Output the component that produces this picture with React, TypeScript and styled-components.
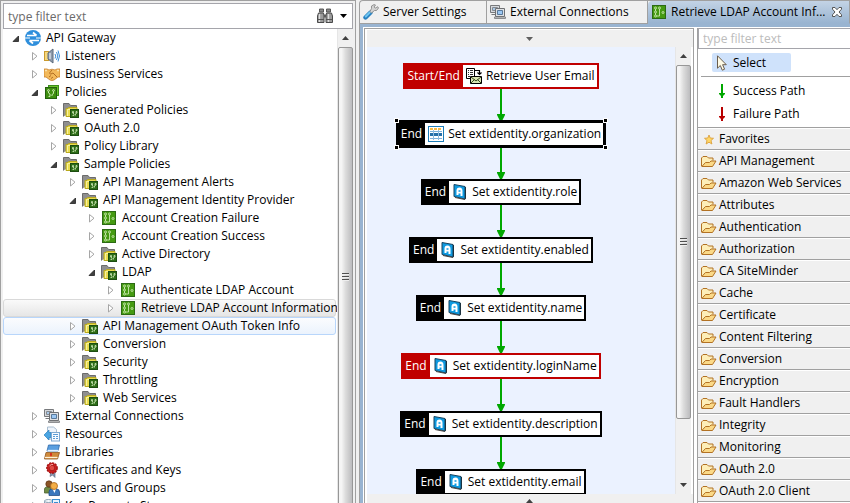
import React, { useState } from "react";
import styled, { createGlobalStyle, css } from "styled-components";

const GlobalStyle = createGlobalStyle`
  * { box-sizing: border-box; }
  body {
    margin: 0;
    background: #f0f0f0;
    color: #000;
    font-family: "Open Sans", "Noto Sans", sans-serif;
    font-size: 12px;
    line-height: 18px;
    overflow: hidden;
  }
  button, input {
    font: inherit;
    color: inherit;
    border: 0;
    padding: 0;
    margin: 0;
    background: none;
    outline: none;
  }
  ul { list-style: none; margin: 0; padding: 0; }
`;

/* ---------- icons ---------- */

const Icon = styled.svg.attrs({ viewBox: "0 0 16 16", "aria-hidden": true })`
  display: block;
  flex: none;
  width: 16px;
  height: 16px;
`;

const GatewayIcon = () => (
  <Icon>
    <circle cx="8" cy="8" r="8" fill="#2f8fdc" />
    <path d="M2 5.500h9.500M8 2.500l3.500 3M14 10.500H4.500M8 13.500l-3.500-3" stroke="#fff" strokeWidth="1.700" fill="none" />
    <path d="M0 8h5M11 8h5" stroke="#fff" strokeWidth="1" />
  </Icon>
);

const ListenersIcon = () => (
  <Icon>
    <rect x="0.500" y="3.500" width="4" height="9" fill="#f6d77c" stroke="#c99a2e" />
    <path d="M4 5l5-4v14l-5-4z" fill="#8e9bab" stroke="#5c6a7c" />
    <path d="M6 5v6" stroke="#d4dbe4" strokeWidth="1.500" />
    <path d="M11 6q1.500 2 0 4.500M12.500 4q2.700 4 0 8M14 2.500q3 5.500 0 11" stroke="#3b8ed8" fill="none" />
  </Icon>
);

const BusinessIcon = () => (
  <Icon>
    <path d="M0 3h3l2 1 3-.8 3 .8 2-1h3v8h-2l-4 3-2 .5-2-.5-4-3H0z" fill="#f3b95a" stroke="#c67e28" strokeWidth=".8" />
    <path d="M8 4L5.500 7l1 1.200L9 7l4 4M5 11l2-1.500M7 12.500l2-1.500" stroke="#a9641c" fill="none" strokeWidth=".9" />
    <path d="M1 4.500h2M13 4.500h2" stroke="#fbe3ab" strokeWidth="1.500" />
  </Icon>
);

const Circuit = () => (
  <g fill="none" stroke="#d8f0c0" strokeWidth=".8">
    <circle cx="4.500" cy="4" r="1" />
    <circle cx="4.500" cy="8" r="1" />
    <circle cx="4.500" cy="12" r="1" />
    <path d="M4.500 5v2M4.500 9v2M8.500 5v7h-3" />
    <circle cx="8.500" cy="4" r="1" />
    <circle cx="12" cy="8.500" r="1" />
  </g>
);

const PolicyIcon = () => (
  <Icon>
    <rect x="1.500" y="1.500" width="13" height="13" fill="#459a12" stroke="#2c6a14" />
    <Circuit />
  </Icon>
);

const PoliciesIcon = () => (
  <Icon>
    <rect x="4.500" y="1.500" width="10" height="10" fill="#6cc42c" stroke="#3c8c1a" />
    <rect x="1.500" y="3.500" width="11" height="11" fill="#3f8f10" stroke="#24600f" />
    <g fill="none" stroke="#d8f0c0" strokeWidth=".9">
      <circle cx="4.500" cy="6.500" r=".9" />
      <path d="M4.500 7.500v1.500l1.500 1v2.500H4.500" />
      <circle cx="9.500" cy="6.500" r=".9" />
      <path d="M9.500 7.500v2l-1.500 1v1.500" />
    </g>
  </Icon>
);

const FolderPolicyIcon = () => (
  <Icon>
    <path d="M.5 14.500v-13h5.500l1.500 2h6v3" fill="#8f8f8f" stroke="#6c6c6c" />
    <path d="M3 14.500V6.500h2l.5-1h8.500v9z" fill="#e9dc50" stroke="#b9a91e" />
    <path d="M4.500 14V7.500h8.500" fill="none" stroke="#f8f2a0" />
    <rect x="7.500" y="7.500" width="8" height="8" fill="#2d6d17" stroke="#1d4d12" />
    <path d="M9.500 9.500h1v1.500h-1zM10 11l1 1v1.500H9.500M13 9.500h1V11h-1zM13.500 11l-1 1v1.500" fill="none" stroke="#cfe8b8" strokeWidth=".8" />
  </Icon>
);

const ConnectionsIcon = () => (
  <Icon>
    <path d="M.5 1.500h9v7h-9zM1.500 10.500h7" fill="#d6d9dd" stroke="#77797c" />
    <path d="M2.500 3.500h5v3h-5z" fill="#a8c8e8" stroke="#868b91" />
    <path d="M5.500 4.500h9v8h-9z" fill="#dfe1e4" stroke="#6e7073" />
    <path d="M7.500 6.500h5v4h-5z" fill="#9cc7f3" stroke="#58799b" />
    <path d="M4.500 14.500h11v-1.500h-11z" fill="#d6d6d6" stroke="#77797c" strokeWidth=".8" />
  </Icon>
);

const ResourcesIcon = () => (
  <Icon>
    <path d="M3.500 1h6l3 2.500V13h-9z" fill="#eef4fb" stroke="#a8bccf" />
    <path d="M0 9l5-5v2.500h2v5H5V14z" fill="#4aa5e2" stroke="#2d7fbf" strokeWidth=".7" />
    <rect x="7.500" y="6.500" width="8" height="8.500" fill="#f8fbff" stroke="#7ea9d2" />
    <path d="M9 8.500h5M9 10.500h2M12 10.500h2M9 12.500h2M12 12.500h2" stroke="#5b9bd5" />
  </Icon>
);

const LibrariesIcon = () => (
  <Icon>
    <path d="M4.500 1h11L14 7H3z" fill="#5a9fe0" stroke="#2e68a8" strokeWidth=".8" />
    <path d="M3.500 6.500h11" stroke="#e4f1ff" strokeWidth="1.300" />
    <path d="M2 8.500h13.500l-2 6.500H.5z" fill="#cf8a3c" stroke="#8e5620" strokeWidth=".8" />
    <path d="M1 13.500h12.500" stroke="#fff2d8" strokeWidth="1.300" />
    <path d="M6 9h2v3.500l-1-1-1 1z" fill="#d9321e" />
  </Icon>
);

const CertificateIcon = () => (
  <Icon>
    <path d="M7 9l-1 5.500 2.500-1.500 2.500 2.500V9z" fill="#8794ad" stroke="#566582" strokeWidth=".6" />
    <circle cx="8" cy="6" r="5.200" fill="#cc1f1f" stroke="#9e1313" strokeWidth="1.300" strokeDasharray="2 1" />
    <circle cx="8" cy="6" r="2.800" fill="#e04a44" stroke="#a01616" strokeWidth=".8" />
    <path d="M5.500 4q1.500-2 3.500-1.500" stroke="#f7a9a4" fill="none" />
  </Icon>
);

const UsersIcon = () => (
  <Icon>
    <path d="M.5 13V9q0-2 3-2h3v6z" fill="#6f8c46" stroke="#4b6330" strokeWidth=".8" />
    <circle cx="5" cy="4" r="3.200" fill="#8c5426" stroke="#5d3414" strokeWidth=".7" />
    <path d="M5 15.500V12q0-3 3-3h4.500q3 0 3 3v3.500z" fill="#3a77bd" stroke="#24518a" strokeWidth=".8" />
    <path d="M8.500 9h3.500l-1.500 4z" fill="#fff" />
    <circle cx="10" cy="6" r="3.500" fill="#f4ae46" stroke="#a9661b" strokeWidth=".8" />
  </Icon>
);

const StoreIcon = () => (
  <Icon>
    <path d="M.5 3v10q4 3 8 0V3z" fill="#dfe9f2" stroke="#8ca2b5" />
    <ellipse cx="4.500" cy="3" rx="4" ry="1.500" fill="#f5f9fc" stroke="#8ca2b5" />
    <rect x="8.500" y="1.500" width="7" height="12" fill="#e8f4ff" stroke="#3c8ecf" />
    <path d="M10 4.500h4M10 7.500h4" stroke="#3c8ecf" />
  </Icon>
);

const BinocularsIcon = () => (
  <Icon>
    <path d="M2.500 1h4v3h-4zM9.500 1h4v3h-4z" fill="#8a8a8a" stroke="#4d4d4d" strokeWidth=".9" />
    <path d="M1.500 5h5l.5 3v6.500H.5V8zM9.500 5h5l1 3v6.500H9V8z" fill="#9b9b9b" stroke="#4a4a4a" />
    <path d="M7 6.500h2v3H7z" fill="#5c5c5c" />
    <path d="M2.500 6v8M11.500 6v8" stroke="#ddd" strokeWidth="1.300" />
    <path d="M.5 11.500h6.500M9 11.500h6.500" stroke="#555" />
  </Icon>
);

const WrenchIcon = () => (
  <Icon>
    <path d="M7.500 8.500L2.500 13.500" stroke="#2780c0" strokeWidth="4.400" strokeLinecap="round" />
    <path d="M7 8.300L2.800 12.500" stroke="#6fc5f0" strokeWidth="2" strokeLinecap="round" />
    <path d="M7 7.500L8.500 9l3-2.500h2L15.500 4l-.8-1.300-2.200 1.300-1.500-1L12.500 1 11 .6 8.500 2v2.500z" fill="#d3d3d3" stroke="#8b8b8b" strokeWidth=".9" />
  </Icon>
);

const MailListIcon = () => (
  <Icon>
    <path d="M.5.500h8v10h-8z" fill="#fff" stroke="#000" />
    <path d="M2 2.500h1M4 2.500h3M2 4.500h1M4 4.500h3M2 6.500h1M4 6.500h3M2 8.500h2" stroke="#333" />
    <path d="M9 2.500h4.500V6M11.500 4.500l2 2 2-2" fill="none" stroke="#000" strokeWidth="1.200" />
    <path d="M4.500 8.500h11v7h-11z" fill="#d9e6b4" stroke="#000" />
    <path d="M5 9l5 4 5-4M5 15l3.500-3.500M15 15l-3.500-3.500" fill="none" stroke="#36461c" />
  </Icon>
);

const TableIcon = () => (
  <Icon>
    <rect x=".5" y=".5" width="15" height="15" fill="#fff" stroke="#1c7db8" />
    <path d="M2 3h12" stroke="#f7bb45" strokeWidth="2" strokeDasharray="3 1" />
    <path d="M2 5.500h12M2 7.500h12M2 9.500h12M2 12.500h12" stroke="#7eb2db" />
    <rect x="2" y="7" width="12" height="3" fill="#256fa8" />
    <path d="M5.500 4v10M10.500 4v10" stroke="#8fbbe0" />
  </Icon>
);

const AttributeIcon = () => (
  <Icon>
    <path d="M13 3h1v11.500l-1 1z" fill="#222" />
    <path d="M2 .5l11 2v12.500L2 12.500z" fill="#0f9ae0" stroke="#16435f" />
    <path d="M4.500 11V6.500q0-3 3-3t3 3.500v5H8.500V9.500h-2V11zM6.500 6.200v1.500h2V6.200z" fill="#fff" fillRule="evenodd" />
    <path d="M3 13.500l10 2" stroke="#444" />
  </Icon>
);

const CursorIcon = () => (
  <Icon>
    <path d="M3.500.800v12.400l2.800-2.700 2 4.700 2.300-1-2-4.500h3.700z" fill="#fffbe6" stroke="#6a5d4c" />
  </Icon>
);

const PathIcon = ({ color }: { color: string }) => (
  <Icon>
    <path d="M7 1h2v9h2v1l-2 2v2H7v-2l-2-2v-1h2z" fill={color} />
  </Icon>
);

const StarIcon = () => (
  <Icon>
    <path d="M8 4l1.200 3 3.300.3-2.500 2.200.9 3.500L8 11.200 5.100 13l.9-3.500-2.500-2.200 3.300-.3z" fill="#ffd766" stroke="#dba03c" strokeWidth=".9" />
  </Icon>
);

const FolderIcon = () => (
  <Icon>
    <path d="M.5 13V5L2 3.500h4L7.500 5h4.500v2.500" fill="#fdeeb8" stroke="#b27224" />
    <path d="M.8 13.500L4.500 9.500H8.500l1.500-1.500h5L11.500 13.500z" fill="#fbd987" stroke="#b27224" />
  </Icon>
);

const CloseIcon = () => (
  <svg width="12" height="12" viewBox="0 0 12 12" aria-hidden="true">
    <path
      d="M1.500 1.500h2.500L6 3.700 8 1.500h2.500v1.700L8 6l2.500 2.800v1.700H8L6 8.300 4 10.500H1.500V8.800L4 6 1.500 3.200z"
      fill="#fff"
      stroke="#555"
    />
  </svg>
);

const Twist = ({ open }: { open: boolean }) => (
  <svg width="8" height="10" viewBox="0 0 8 10" aria-hidden="true">
    {open ? (
      <path d="M6.500 3v5.500H1z" fill="#404040" stroke="#222" strokeWidth=".8" />
    ) : (
      <path d="M1.500 1.500v7.500L6 5.200z" fill="#fff" stroke="#a6a6a6" />
    )}
  </svg>
);

const Caret = ({ up, color = "#404040" }: { up?: boolean; color?: string }) => (
  <svg width="7" height="4" viewBox="0 0 7 4" aria-hidden="true">
    <path d={up ? "M0 4L3.500 0 7 4z" : "M0 0h7L3.500 4z"} fill={color} />
  </svg>
);

/* ---------- frame ---------- */

const Shell = styled.main`
  display: grid;
  grid-template-columns: 356px minmax(0, 1fr);
  column-gap: 3px;
  height: 100vh;
  overflow: hidden;
`;

const Explorer = styled.section`
  display: flex;
  flex-direction: column;
  min-height: 0;
  padding: 2px 2px 0 2px;
  border: solid #a0a0a0;
  border-width: 1px 1px 0 1px;
`;

const FilterBar = styled.div`
  display: flex;
  align-items: center;
  flex: none;
  height: 26px;
  padding-right: 5px;
  gap: 7px;
  background: #fff;
  border: 1px solid #a5a5ab;
`;

const FilterInput = styled.input<{ $faint?: boolean }>`
  flex: 1;
  min-width: 0;
  height: 100%;
  padding-left: 4px;
  &::placeholder {
    color: ${(p) => (p.$faint ? "#bcbcbc" : "#6a6a6a")};
    opacity: 1;
  }
`;

const IconButton = styled.button`
  display: flex;
  align-items: center;
  justify-content: center;
  flex: none;
`;

const ExplorerBody = styled.div`
  display: flex;
  flex: 1;
  min-height: 0;
  overflow: hidden;
  background: #fff;
`;

const Tree = styled.ul`
  flex: 1;
  min-width: 0;
  padding-right: 1px;
`;

type RowTone = "selected" | "hot" | undefined;

const TreeRow = styled.li<{ $depth: number; $tone: RowTone }>`
  display: flex;
  align-items: center;
  height: 18px;
  padding-left: ${(p) => 7 + p.$depth * 19}px;
  border: 1px solid transparent;
  border-radius: 3px;
  white-space: nowrap;
  ${(p) =>
    p.$tone === "selected" &&
    css`
      border-color: #d9d9d9;
      background: linear-gradient(#fafafa, #e6e6e6);
    `}
  ${(p) =>
    p.$tone === "hot" &&
    css`
      border-color: #b8d6fb;
      background: linear-gradient(#fbfcfe, #ebf3fd);
    `}
`;

const TwistButton = styled(IconButton)`
  width: 10px;
  height: 16px;
  margin-right: 4px;
`;

const TreeLabel = styled.span`
  padding-left: 5px;
`;

/* ---------- scroll bar ---------- */

const ScrollTrack = styled.div`
  display: flex;
  flex-direction: column;
  flex: none;
  width: 16px;
  background: #f0f0f0;
  border-left: 1px solid #e6e6e6;
`;

const ScrollArrow = styled(IconButton)`
  height: 18px;
`;

const ScrollThumb = styled.div<{ $share: number; $overrun: boolean }>`
  display: flex;
  flex-direction: column;
  align-items: center;
  justify-content: center;
  gap: 1px;
  flex: ${(p) => p.$share} 1 0;
  margin-bottom: ${(p) => (p.$overrun ? "-4px" : "0")};
  border: 1px solid #979797;
  border-radius: 2px;
  background: linear-gradient(90deg, #f5f5f5 20%, #dcdcdc 50%, #bcbcbe);
`;

const ThumbLine = styled.span`
  width: 7px;
  height: 2px;
  background: linear-gradient(#505050 50%, #eee 50%);
`;

const ScrollRest = styled.div<{ $share: number }>`
  flex: ${(p) => p.$share} 1 0;
`;

const ScrollBar = ({ share, rest }: { share: number; rest: number }) => (
  <ScrollTrack>
    <ScrollArrow aria-label="Scroll up"><Caret up /></ScrollArrow>
    <ScrollThumb $share={share} $overrun={rest === 0}>
      <ThumbLine /><ThumbLine /><ThumbLine />
    </ScrollThumb>
    {rest > 0 && <ScrollRest $share={rest} />}
    {rest > 0 && <ScrollArrow aria-label="Scroll down"><Caret /></ScrollArrow>}
  </ScrollTrack>
);

/* ---------- editor ---------- */

const Editor = styled.section`
  display: flex;
  flex-direction: column;
  min-width: 0;
  min-height: 0;
  border: solid #a0a0a0;
  border-width: 1px 0 0 1px;
  border-top-left-radius: 4px;
`;

const TabStrip = styled.div`
  display: grid;
  grid-template-columns: 127px 161px minmax(0, 1fr);
  flex: none;
  height: 23px;
`;

const Tab = styled.div<{ $active?: boolean }>`
  display: flex;
  align-items: center;
  min-width: 0;
  padding: 0 6px 0 3px;
  border: solid #a0a0a0;
  border-width: 0 1px 1px 0;
  ${(p) =>
    p.$active &&
    css`
      border-bottom-color: #99b4d1;
      border-top-left-radius: 4px;
      background: linear-gradient(#c3d3e5, #99b4d1);
    `}
`;

const TabButton = styled.button`
  display: flex;
  align-items: center;
  flex: 1;
  min-width: 0;
  gap: 4px;
  white-space: nowrap;
`;

const EditorFrame = styled.div`
  display: flex;
  flex: 1;
  min-height: 0;
  padding: 3px 0 0 3px;
  background: #99b4d1;
`;

const EditorBody = styled.div`
  display: grid;
  grid-template-columns: minmax(0, 1fr) 156px;
  flex: 1;
  min-width: 0;
  padding: 1px 0 0 1px;
  background: #fff;
`;

const CanvasPane = styled.div`
  display: flex;
  flex-direction: column;
  min-width: 0;
  min-height: 0;
  padding: 1px 0 0 2px;
  border: solid #a0a0a0;
  border-width: 1px 1px 0 1px;
`;

const CanvasBar = styled.button`
  display: flex;
  align-items: center;
  justify-content: center;
  flex: none;
  height: 17px;
  padding-right: 2px;
  background: #f0f0f0;
`;

const CanvasFoot = styled(CanvasBar)`
  align-items: flex-end;
  height: 9px;
`;

const CanvasRow = styled.div`
  display: flex;
  flex: 1;
  min-height: 0;
  padding-right: 2px;
`;

const Canvas = styled.div`
  display: flex;
  flex-direction: column;
  align-items: center;
  flex: 1;
  min-width: 0;
  overflow: hidden;
  padding: 16px 40px 0 0;
  background: #ebf2ff;
`;

const Node = styled.div<{ $red?: boolean; $selected?: boolean }>`
  position: relative;
  display: flex;
  flex: none;
  height: 26px;
  color: #000;
  background: #fff;
  white-space: nowrap;
  border: 2px solid ${(p) => (p.$red ? "#c00000" : "#000")};
  ${(p) => p.$selected && css`outline: 1px solid #000;`}
`;

const NodeTag = styled.span<{ $red?: boolean }>`
  display: flex;
  align-items: center;
  padding: 0 3px 0 2px;
  color: #fff;
  background: ${(p) => (p.$red ? "#c00000" : "#000")};
`;

const NodeBody = styled.span`
  display: flex;
  align-items: center;
  gap: 4px;
  padding: 0 2px 0 3px;
`;

const Handle = styled.span<{ $right?: boolean; $bottom?: boolean }>`
  position: absolute;
  width: 5px;
  height: 5px;
  background: #000;
  border: 1px solid #fff;
  ${(p) => (p.$right ? "right: -5px;" : "left: -5px;")}
  ${(p) => (p.$bottom ? "bottom: -5px;" : "top: -5px;")}
`;

const LinkArrow = styled.svg.attrs({ viewBox: "0 0 8 32", "aria-hidden": true })`
  display: block;
  flex: none;
  width: 8px;
  height: 32px;
`;

const Link = () => (
  <LinkArrow>
    <path d="M3 0h2v25h3v1L5 32H3L0 26v-1h3z" fill="#00a800" />
  </LinkArrow>
);

/* ---------- palette ---------- */

const Palette = styled.aside`
  display: flex;
  flex-direction: column;
  min-width: 0;
  min-height: 0;
  overflow: hidden;
  margin-left: 3px;
  background: #fff;
  border: solid #a0a0a0;
  border-width: 0 0 0 1px;
`;

const PaletteFilter = styled.div`
  display: flex;
  flex: none;
  height: 21px;
  border: solid #a5a5ab;
  border-width: 1px 0 1px 1px;
`;

const Tool = styled.button<{ $active?: boolean }>`
  display: flex;
  align-items: center;
  flex: none;
  gap: 3px;
  height: 19px;
  padding-left: 2px;
  border-radius: 2px;
  align-self: flex-start;
  ${(p) =>
    p.$active &&
    css`
      width: 79px;
      background: #cfe2fb;
    `}
`;

const ToolGroup = styled.div`
  display: flex;
  flex-direction: column;
  gap: 4px;
  padding: 4px 0 4px 14px;
`;

const Rule = styled.hr`
  flex: none;
  width: auto;
  height: 1px;
  margin: 0 0 0 3px;
  border: 0;
  background: #a0a0a0;
`;

const DrawerList = styled.ul`
  border-top: 1px solid #a0a0a0;
`;

const Drawer = styled.li`
  height: 22px;
  border-top: 1px solid #fff;
  border-bottom: 1px solid #a0a0a0;
  background: #f0f0f0;
`;

const DrawerButton = styled.button`
  display: flex;
  align-items: center;
  gap: 2px;
  width: 100%;
  height: 20px;
  padding-left: 3px;
  white-space: nowrap;
`;

/* ---------- data ---------- */

type TreeItem = {
  label: string;
  depth: number;
  icon: React.FC;
  open?: boolean;
  tone?: RowTone;
};

const treeItems: TreeItem[] = [
  { label: "API Gateway", depth: 0, icon: GatewayIcon, open: true },
  { label: "Listeners", depth: 1, icon: ListenersIcon },
  { label: "Business Services", depth: 1, icon: BusinessIcon },
  { label: "Policies", depth: 1, icon: PoliciesIcon, open: true },
  { label: "Generated Policies", depth: 2, icon: FolderPolicyIcon },
  { label: "OAuth 2.0", depth: 2, icon: FolderPolicyIcon },
  { label: "Policy Library", depth: 2, icon: FolderPolicyIcon },
  { label: "Sample Policies", depth: 2, icon: FolderPolicyIcon, open: true },
  { label: "API Management Alerts", depth: 3, icon: FolderPolicyIcon },
  { label: "API Management Identity Provider", depth: 3, icon: FolderPolicyIcon, open: true },
  { label: "Account Creation Failure", depth: 4, icon: PolicyIcon },
  { label: "Account Creation Success", depth: 4, icon: PolicyIcon },
  { label: "Active Directory", depth: 4, icon: FolderPolicyIcon },
  { label: "LDAP", depth: 4, icon: FolderPolicyIcon, open: true },
  { label: "Authenticate LDAP Account", depth: 5, icon: PolicyIcon },
  { label: "Retrieve LDAP Account Information", depth: 5, icon: PolicyIcon, tone: "selected" },
  { label: "API Management OAuth Token Info", depth: 3, icon: FolderPolicyIcon, tone: "hot" },
  { label: "Conversion", depth: 3, icon: FolderPolicyIcon },
  { label: "Security", depth: 3, icon: FolderPolicyIcon },
  { label: "Throttling", depth: 3, icon: FolderPolicyIcon },
  { label: "Web Services", depth: 3, icon: FolderPolicyIcon },
  { label: "External Connections", depth: 1, icon: ConnectionsIcon },
  { label: "Resources", depth: 1, icon: ResourcesIcon },
  { label: "Libraries", depth: 1, icon: LibrariesIcon },
  { label: "Certificates and Keys", depth: 1, icon: CertificateIcon },
  { label: "Users and Groups", depth: 1, icon: UsersIcon },
  { label: "Key Property Stores", depth: 1, icon: StoreIcon },
];

const nodes = [
  { label: "Retrieve User Email", tag: "Start/End", icon: MailListIcon, red: true },
  { label: "Set extidentity.organization", tag: "End", icon: TableIcon, selected: true },
  { label: "Set extidentity.role", tag: "End", icon: AttributeIcon },
  { label: "Set extidentity.enabled", tag: "End", icon: AttributeIcon },
  { label: "Set extidentity.name", tag: "End", icon: AttributeIcon },
  { label: "Set extidentity.loginName", tag: "End", icon: AttributeIcon, red: true },
  { label: "Set extidentity.description", tag: "End", icon: AttributeIcon },
  { label: "Set extidentity.email", tag: "End", icon: AttributeIcon },
];

const drawers = [
  "API Management", "Amazon Web Services", "Attributes", "Authentication",
  "Authorization", "CA SiteMinder", "Cache", "Certificate", "Content Filtering",
  "Conversion", "Encryption", "Fault Handlers", "Integrity", "Monitoring",
  "OAuth 2.0", "OAuth 2.0 Client",
];

export default function App() {
  const [closed, setClosed] = useState<string[]>([]);

  const toggle = (label: string) =>
    setClosed((c) => (c.includes(label) ? c.filter((l) => l !== label) : [...c, label]));

  let hiddenBelow = Infinity;
  const visible = treeItems.filter((item) => {
    if (item.depth > hiddenBelow) return false;
    hiddenBelow = item.open && closed.includes(item.label) ? item.depth : Infinity;
    return true;
  });

  return (
    <>
      <GlobalStyle />
      <Shell>
        <Explorer>
          <FilterBar>
            <FilterInput aria-label="Filter tree" placeholder="type filter text" />
            <IconButton aria-label="Search"><BinocularsIcon /></IconButton>
            <IconButton aria-label="Search options"><Caret color="#000" /></IconButton>
          </FilterBar>
          <ExplorerBody>
            <Tree role="tree">
              {visible.map((item) => {
                const open = !!item.open && !closed.includes(item.label);
                const Glyph = item.icon;
                return (
                  <TreeRow
                    key={item.label}
                    role="treeitem"
                    aria-level={item.depth + 1}
                    aria-expanded={open}
                    aria-selected={item.tone === "selected"}
                    $depth={item.depth}
                    $tone={item.tone}
                  >
                    <TwistButton aria-label={`Toggle ${item.label}`} onClick={() => toggle(item.label)}>
                      <Twist open={open} />
                    </TwistButton>
                    <Glyph />
                    <TreeLabel>{item.label}</TreeLabel>
                  </TreeRow>
                );
              })}
            </Tree>
            <ScrollBar share={1} rest={0} />
          </ExplorerBody>
        </Explorer>

        <Editor>
          <TabStrip role="tablist">
            <Tab>
              <TabButton role="tab" aria-selected={false}><WrenchIcon />Server Settings</TabButton>
            </Tab>
            <Tab>
              <TabButton role="tab" aria-selected={false}><ConnectionsIcon />External Connections</TabButton>
            </Tab>
            <Tab $active>
              <TabButton role="tab" aria-selected><PolicyIcon />Retrieve LDAP Account Inf...</TabButton>
              <IconButton aria-label="Close tab"><CloseIcon /></IconButton>
            </Tab>
          </TabStrip>
          <EditorFrame>
            <EditorBody>
              <CanvasPane>
                <CanvasBar aria-label="Expand header"><Caret color="#606060" /></CanvasBar>
                <CanvasRow>
                  <Canvas>
                    {nodes.map((node, i) => {
                      const Glyph = node.icon;
                      return (
                        <React.Fragment key={node.label}>
                          {i > 0 && <Link />}
                          <Node $red={node.red} $selected={node.selected}>
                            <NodeTag $red={node.red}>{node.tag}</NodeTag>
                            <NodeBody><Glyph />{node.label}</NodeBody>
                            {node.selected && (
                              <>
                                <Handle />
                                <Handle $right />
                                <Handle $bottom />
                                <Handle $right $bottom />
                              </>
                            )}
                          </Node>
                        </React.Fragment>
                      );
                    })}
                  </Canvas>
                  <ScrollBar share={353} rest={57} />
                </CanvasRow>
                <CanvasFoot aria-label="Expand footer"><Caret up /></CanvasFoot>
              </CanvasPane>
              <Palette>
                <PaletteFilter>
                  <FilterInput $faint aria-label="Filter palette" placeholder="type filter text" />
                </PaletteFilter>
                <ToolGroup>
                  <Tool $active><CursorIcon />Select</Tool>
                </ToolGroup>
                <Rule />
                <ToolGroup>
                  <Tool><PathIcon color="#00a800" />Success Path</Tool>
                  <Tool><PathIcon color="#b80000" />Failure Path</Tool>
                </ToolGroup>
                <DrawerList>
                  <Drawer><DrawerButton><StarIcon />Favorites</DrawerButton></Drawer>
                  {drawers.map((name) => (
                    <Drawer key={name}><DrawerButton><FolderIcon />{name}</DrawerButton></Drawer>
                  ))}
                </DrawerList>
              </Palette>
            </EditorBody>
          </EditorFrame>
        </Editor>
      </Shell>
    </>
  );
}
